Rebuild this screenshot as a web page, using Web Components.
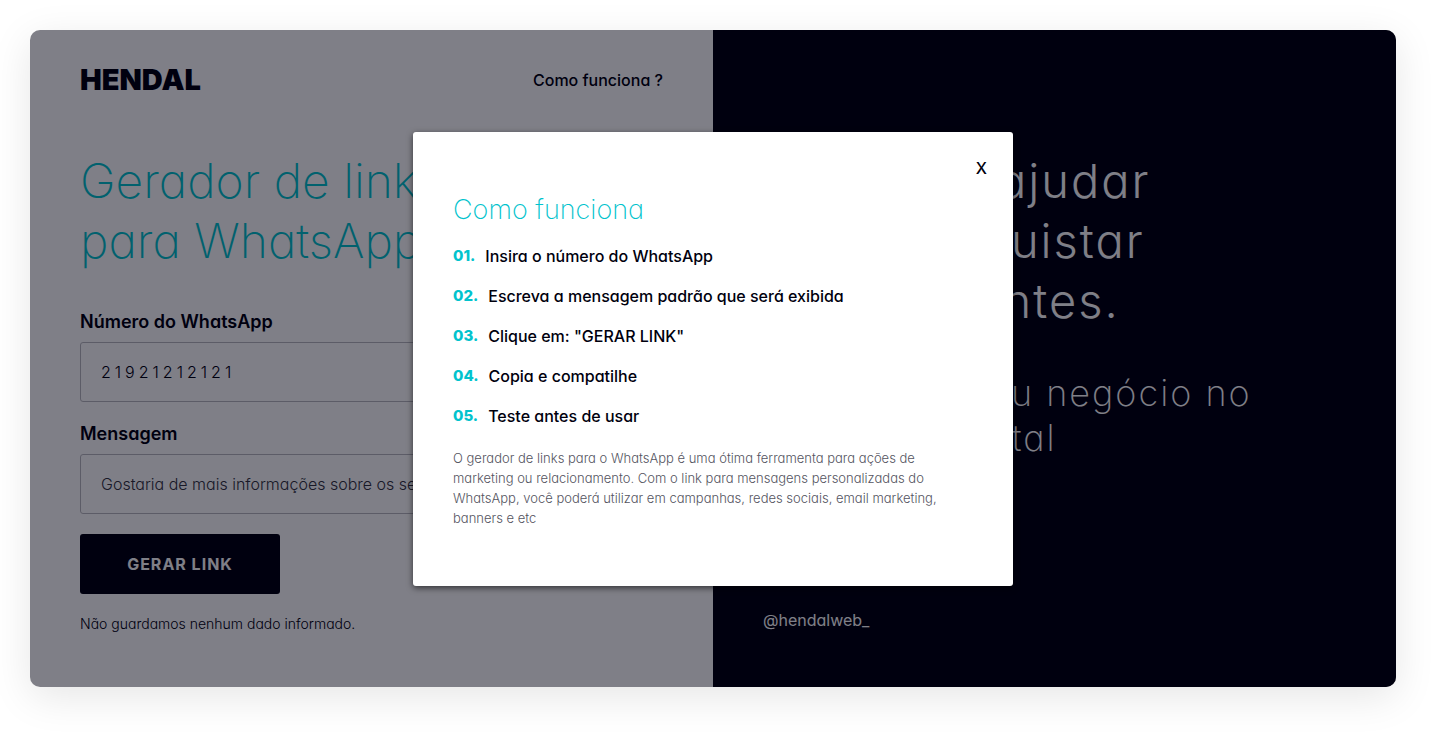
<!DOCTYPE html>
<html lang="pt-BR">
<head>
<meta charset="utf-8">
<meta name="viewport" content="width=device-width, initial-scale=1">
<title>Hendal - Gerador de links para WhatsApp</title>
<style>
  :root { --ink: #00000e; --teal: #02c3cd; --grey: #55555f; }
  body { margin: 0; background: #fff; color: var(--ink); font: 500 16px/20px Inter, "Liberation Sans", sans-serif; font-feature-settings: "cv11"; }
</style>
</head>
<body>
<hendal-page></hendal-page>
<script>
const define = (name, html) => {
  const template = document.createElement('template');
  template.innerHTML = html;
  customElements.define(name, class extends HTMLElement {
    constructor() {
      super();
      this.attachShadow({ mode: 'open' }).append(template.content.cloneNode(true));
    }
    connectedCallback() {
      const input = this.shadowRoot.querySelector('input');
      if (input) {
        this.shadowRoot.querySelector('label').textContent = this.getAttribute('label');
        input.value = this.getAttribute('value');
        input.type = this.getAttribute('type') || 'text';
      }
      const number = this.shadowRoot.querySelector('.number');
      if (number) number.textContent = this.getAttribute('number');
    }
  });
};

define('hendal-header', `
  <style>
    :host { display: flex; justify-content: space-between; align-items: center; height: 20px; }
    a { color: inherit; text-decoration: none; white-space: nowrap; }
    .logo { font-size: 29px; font-weight: 900; }
  </style>
  <a class="logo" href="#">HENDAL</a>
  <a href="#como-funciona">Como funciona ?</a>`);

define('hendal-field', `
  <style>
    :host { display: flex; flex-direction: column; gap: 10px; }
    label { font-size: 18px; font-weight: 600; }
    input { box-sizing: border-box; width: 100%; height: 60px; padding: 0 20px; border: 1px solid #b9b9bf; border-radius: 3px; background: none; color: var(--field-color, #33333f); font: inherit; font-weight: 300; font-feature-settings: inherit; letter-spacing: var(--field-spacing, normal); }
  </style>
  <label for="control"></label>
  <input id="control">`);

define('hendal-form', `
  <style>
    :host { display: block; }
    form { display: flex; flex-direction: column; align-items: flex-start; gap: 20px; }
    .fields { display: grid; gap: 22px; align-self: stretch; }
    .phone { --field-spacing: 4px; --field-color: var(--ink); }
    button { width: 200px; height: 60px; border: 0; border-radius: 3px; background: var(--ink); color: #fff; font: inherit; font-weight: 700; letter-spacing: 1px; }
    p { margin: 0; font-size: 14px; font-weight: 300; }
  </style>
  <form>
    <div class="fields">
      <hendal-field class="phone" label="Número do WhatsApp" type="tel" value="21921212121"></hendal-field>
      <hendal-field label="Mensagem" value="Gostaria de mais informações sobre os serviços"></hendal-field>
    </div>
    <button type="button">GERAR LINK</button>
    <p>Não guardamos nenhum dado informado.</p>
  </form>`);

define('hendal-promo', `
  <style>
    :host { display: flex; flex-direction: column; box-sizing: border-box; padding: 121px 50px 57px; background: var(--ink); color: #fff; }
    h2, p { margin: 0; letter-spacing: 2px; white-space: nowrap; }
    h2 { font-size: 47px; line-height: 60px; font-weight: 300; }
    p { margin-top: 40px; font-size: 36px; line-height: 45px; font-weight: 200; }
    a { margin-top: auto; color: inherit; text-decoration: none; font-weight: 400; }
  </style>
  <h2>Podemos ajudar<br>você conquistar<br>novos clientes.</h2>
  <p>Posicionar seu negócio no<br>ambiente digital</p>
  <a href="#instagram">@hendalweb_</a>`);

define('hendal-step', `
  <style>
    :host { display: flex; gap: 10px; }
    .number { color: var(--teal); font-size: 15px; font-weight: 800; }
  </style>
  <span class="number"></span><span><slot></slot></span>`);

define('hendal-modal', `
  <style>
    :host { position: absolute; inset: 0; display: flex; align-items: center; justify-content: center; background: rgba(0, 0, 16, .5); }
    section { box-sizing: border-box; width: 100%; max-width: 600px; padding: 26px 40px 58px; border-radius: 3px; background: #fff; box-shadow: 0 2px 6px rgba(0, 0, 0, .6); }
    header { display: flex; justify-content: flex-end; margin-right: -14px; }
    button { padding: 0; border: 0; background: none; color: inherit; font: inherit; }
    h2 { margin: 12px 0 16px; color: var(--teal); font-size: 27px; line-height: 40px; font-weight: 200; }
    ol { display: flex; flex-direction: column; gap: 20px; margin: 0; padding: 0; list-style: none; }
    p { margin: 22px 20px 0 0; color: var(--grey); font-size: 13px; font-weight: 300; }
  </style>
  <section role="dialog" aria-labelledby="title">
    <header><button type="button" aria-label="Fechar">X</button></header>
    <h2 id="title">Como funciona</h2>
    <ol>
      <li><hendal-step number="01.">Insira o número do WhatsApp</hendal-step></li>
      <li><hendal-step number="02.">Escreva a mensagem padrão que será exibida</hendal-step></li>
      <li><hendal-step number="03.">Clique em: "GERAR LINK"</hendal-step></li>
      <li><hendal-step number="04.">Copia e compatilhe</hendal-step></li>
      <li><hendal-step number="05.">Teste antes de usar</hendal-step></li>
    </ol>
    <p>O gerador de links para o WhatsApp é uma ótima ferramenta para ações de marketing ou relacionamento. Com o link para mensagens personalizadas do WhatsApp, você poderá utilizar em campanhas, redes sociais, email marketing, banners e etc</p>
  </section>`);

define('hendal-page', `
  <style>
    :host { display: grid; box-sizing: border-box; min-height: 100vh; padding: 30px 50px 50px 30px; }
    main { position: relative; display: grid; grid-template-columns: minmax(0, 1fr) minmax(0, 1fr); overflow: hidden; border-radius: 10px; box-shadow: 0 10px 40px rgba(0, 0, 0, .1); }
    .generator { padding: 40px 50px 50px; }
    h1 { margin: 61px 0 41px; color: var(--teal); font-size: 48px; line-height: 60px; font-weight: 200; }
  </style>
  <main>
    <div class="generator">
      <hendal-header></hendal-header>
      <h1>Gerador de links<br>para WhatsApp</h1>
      <hendal-form></hendal-form>
    </div>
    <hendal-promo></hendal-promo>
    <hendal-modal></hendal-modal>
  </main>`);
</script>
</body>
</html>
